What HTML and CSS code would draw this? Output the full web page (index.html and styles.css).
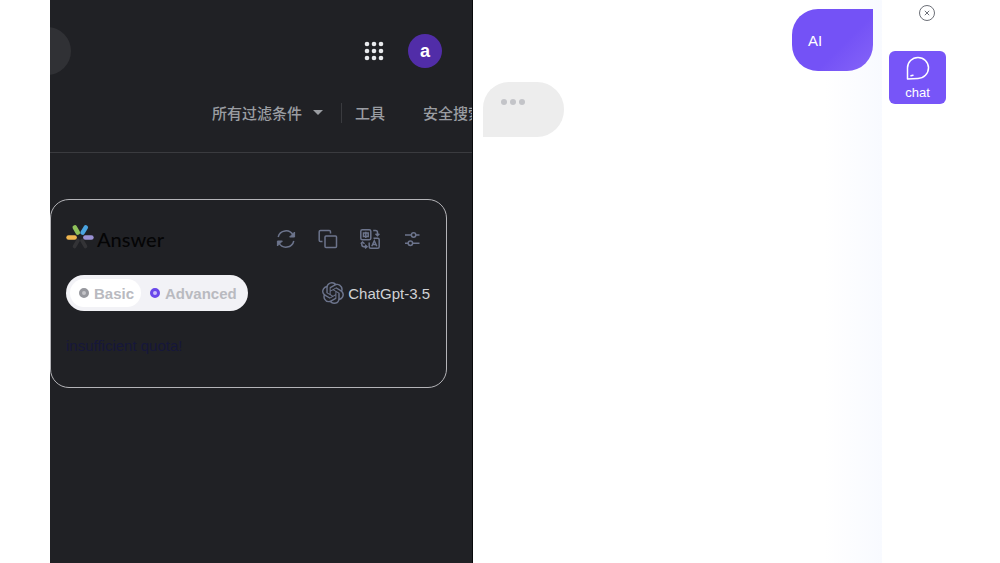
FILE: index.html
```
<!DOCTYPE html>
<html lang="zh-CN">
<head>
  <meta charset="UTF-8">
  <meta name="viewport" content="width=device-width, initial-scale=1.0">
  <title>Answer</title>
  <link rel="stylesheet" href="styles.css">
</head>
<body>
  <div class="container">
    <main class="results">
      <header class="topbar">
        <input type="search" class="search" aria-label="搜索">
        <button class="icon-btn apps" aria-label="Apps">
          <svg width="20" height="20" viewBox="0 0 20 20" fill="#e8eaed">
            <circle cx="3" cy="3" r="2.3"/><circle cx="10" cy="3" r="2.3"/><circle cx="17" cy="3" r="2.3"/>
            <circle cx="3" cy="10" r="2.3"/><circle cx="10" cy="10" r="2.3"/><circle cx="17" cy="10" r="2.3"/>
            <circle cx="3" cy="17" r="2.3"/><circle cx="10" cy="17" r="2.3"/><circle cx="17" cy="17" r="2.3"/>
          </svg>
        </button>
        <button class="avatar">a</button>
      </header>
      <nav class="filters">
        <button class="filter">所有过滤条件 <span class="caret"></span></button>
        <button class="filter tools">工具</button>
        <button class="filter">安全搜索</button>
      </nav>

      <section class="card">
        <div class="card-header">
          <svg class="logo" width="28" height="26" viewBox="0 0 28 26" stroke-width="4.6" stroke-linecap="round">
            <path d="M12 16.5L8.5 22.5M16 16.5L19.5 22.5" stroke="#333336" stroke-width="3.6"/>
            <path d="M2.6 13.5H8.6" stroke="#f0b64f"/>
            <path d="M8.8 3.4L11.8 8.6" stroke="#8fc15a"/>
            <path d="M19.8 3.4L16.6 8.6" stroke="#4aa3e0"/>
            <path d="M19.4 13.5H25.4" stroke="#9a91d4"/>
          </svg>
          <h1>Answer</h1>
          <div class="actions">
            <button class="icon-btn" aria-label="Refresh">
              <svg width="20" height="20" viewBox="0 0 20 20">
                <path d="M2.2 8A8 8 0 0 1 17 6M17.8 12A8 8 0 0 1 3 14"/>
                <path d="M18.6 3V8H13.6L18.6 3ZM1.4 17V12H6.4L1.4 17Z" fill="#6c748c" stroke-width="1"/>
              </svg>
            </button>
            <button class="icon-btn" aria-label="Copy">
              <svg width="20" height="20" viewBox="0 0 20 20">
                <path d="M4.5 12.5H2.5A1.3 1.3 0 0 1 1.2 11.2V2.8A1.3 1.3 0 0 1 2.5 1.5H11.2A1.3 1.3 0 0 1 12.5 2.8V4.5"/>
                <rect x="7" y="7" width="11.5" height="11.5" rx="1"/>
              </svg>
            </button>
            <button class="icon-btn" aria-label="Translate">
              <svg width="20" height="20" viewBox="0 0 20 20">
                <rect x="0.8" y="0.8" width="10" height="10" rx="1.5"/>
                <path d="M3.5 4H8.2V7.5H3.5ZM5.8 2.8V9"/>
                <path d="M13.5 9.2H17.7A1.5 1.5 0 0 1 19.2 10.7V17.7A1.5 1.5 0 0 1 17.7 19.2H10.7A1.5 1.5 0 0 1 9.2 17.7V13.5"/>
                <path d="M11.8 17.2L14.3 11.8L16.8 17.2M12.8 15.6H15.8"/>
                <path d="M13.2 1.5H15.5Q17.5 1.5 17.5 3.5V6.3M15.5 4.8L17.5 6.8L19.4 4.8M1.8 13.2V15.5Q1.8 17.7 4 17.7H6.5M0.8 14.8L2.5 13L4.5 14.8M5 15.8L7 17.7L5 19.4"/>
              </svg>
            </button>
            <button class="icon-btn" aria-label="Settings">
              <svg width="20" height="20" viewBox="0 0 20 20">
                <path d="M3 6H9.2M14 6H17.5M3 14.2H6M10.8 14.2H17.5"/>
                <circle cx="11.6" cy="6" r="2.2"/>
                <circle cx="8.4" cy="14.2" r="2.2"/>
              </svg>
            </button>
          </div>
        </div>
        <div class="card-row">
          <div class="toggle">
            <label class="selected"><input type="radio" name="mode" checked>Basic</label>
            <label><input type="radio" name="mode" class="purple">Advanced</label>
          </div>
          <div class="model">
            <svg width="22" height="22" viewBox="0 0 24 24" fill="#6c748c">
              <path d="M22.28 9.82a5.98 5.98 0 0 0-.52-4.91 6.05 6.05 0 0 0-6.51-2.9A6.07 6.07 0 0 0 4.98 4.18a5.98 5.98 0 0 0-4 2.9 6.05 6.05 0 0 0 .74 7.1 5.98 5.98 0 0 0 .51 4.91 6.05 6.05 0 0 0 6.51 2.9A5.98 5.98 0 0 0 13.26 24a6.06 6.06 0 0 0 5.77-4.21 5.99 5.99 0 0 0 4-2.9 6.06 6.06 0 0 0-.75-7.07zm-9.02 12.61a4.48 4.48 0 0 1-2.88-1.04l.14-.08 4.78-2.76a.79.79 0 0 0 .39-.68v-6.74l2.02 1.17a.07.07 0 0 1 .04.05v5.58a4.5 4.5 0 0 1-4.49 4.5zM3.6 18.3a4.47 4.47 0 0 1-.53-3.01l.14.08 4.78 2.76a.77.77 0 0 0 .78 0l5.84-3.37v2.33a.08.08 0 0 1-.03.06L9.74 19.95A4.5 4.5 0 0 1 3.6 18.3zM2.34 7.9a4.49 4.49 0 0 1 2.37-1.98v5.68a.77.77 0 0 0 .39.68l5.81 3.35-2.02 1.17a.08.08 0 0 1-.07 0l-4.83-2.79A4.5 4.5 0 0 1 2.34 7.87zm16.6 3.86-5.84-3.39L15.12 7.2a.08.08 0 0 1 .07 0l4.83 2.79a4.49 4.49 0 0 1-.68 8.1v-5.68a.79.79 0 0 0-.4-.65zm2.01-3.03-.14-.08-4.77-2.78a.78.78 0 0 0-.79 0L9.41 9.23V6.9a.07.07 0 0 1 .03-.06l4.83-2.79a4.5 4.5 0 0 1 6.68 4.66zM8.31 12.86l-2.02-1.16a.08.08 0 0 1-.04-.06V6.07a4.5 4.5 0 0 1 7.38-3.45l-.14.08L8.7 5.46a.79.79 0 0 0-.39.68zm1.1-2.37 2.6-1.5 2.61 1.5v3l-2.6 1.5-2.61-1.5z"/>
            </svg>
            <span>ChatGpt-3.5</span>
          </div>
        </div>
        <p class="message">insufficient quota!</p>
      </section>
    </main>

    <section class="chat">
      <div class="bubble sent">AI</div>
      <div class="bubble typing" aria-label="typing">
        <span class="dot"></span><span class="dot"></span><span class="dot"></span>
      </div>
    </section>

    <aside class="sidebar">
      <button class="icon-btn close" aria-label="Close">
        <svg width="18" height="18" viewBox="0 0 18 18">
          <circle cx="9" cy="9" r="7.5"/>
          <path d="M6.8 6.8L11.2 11.2M11.2 6.8L6.8 11.2"/>
        </svg>
      </button>
      <button class="chat-btn">
        <svg width="26" height="26" viewBox="0 0 26 26" fill="none" stroke="#fff" stroke-width="1.5" stroke-linejoin="round" stroke-linecap="round">
          <path d="M2.5 24V13A10.5 10.5 0 1 1 13 23.4L2.5 24ZM6 20.8L8 20.2"/>
        </svg>
        chat
      </button>
    </aside>
  </div>
</body>
</html>
```
FILE: styles.css
```
* {
  box-sizing: border-box;
}
body {
  margin: 0;
  font-family: "Liberation Sans", Arial, "Noto Sans CJK SC", sans-serif;
  font-size: 15px;
  background-color: #fff;
}
button {
  padding: 0;
  border: none;
  background: none;
  font: inherit;
  cursor: pointer;
}
svg {
  display: block;
}
.container {
  display: flex;
  min-height: 100vh;
  padding: 0 50px;
}

/* search results */
.results {
  flex: 0 0 47%;
  overflow: hidden;
  background-color: #202125;
  border-right: 1px solid #08090c;
}
.topbar {
  display: flex;
  align-items: center;
  padding: 27px 30px 0 0;
}
.search {
  width: 48px;
  height: 48px;
  margin: 0 auto 0 -27px;
  border: none;
  border-radius: 24px;
  background-color: #303135;
  appearance: none;
}
.avatar {
  width: 34px;
  height: 34px;
  margin-left: 24px;
  border-radius: 50%;
  background-color: #512da8;
  color: #fff;
  font-size: 18px;
  font-weight: bold;
}
.filters {
  display: flex;
  align-items: center;
  height: 78px;
  padding: 0 0 2px 162px;
  border-bottom: 1px solid #3a3b3f;
}
.filter {
  display: flex;
  flex-shrink: 0;
  align-items: center;
  color: #9a9da2;
  font-weight: 500;
  white-space: nowrap;
}
.caret {
  margin: 0 18px 0 11px;
  border: 5px solid transparent;
  border-top-color: #9a9da2;
  border-bottom: none;
}
.tools {
  height: 20px;
  margin-right: 38px;
  padding-left: 13px;
  border-left: 1px solid #3a3b3f;
}

/* answer card */
.card {
  margin: 46px 25px 0 0;
  padding: 23px 16px 32px 15px;
  border: 1px solid #b4b4b8;
  border-radius: 19px;
}
.card-header {
  display: flex;
  align-items: center;
  height: 32px;
}
.logo {
  margin-bottom: 4px;
}
h1 {
  margin: 0 0 0 3px;
  color: #050506;
  font-family: Lato, sans-serif;
  font-size: 20px;
  font-weight: 500;
}
.actions {
  display: flex;
  gap: 22px;
  margin: 0 8px 0 auto;
}
.actions svg {
  fill: none;
  stroke: #6c748c;
  stroke-width: 1.5;
}
.card-row {
  display: flex;
  align-items: center;
  justify-content: space-between;
  margin-top: 20px;
}
.toggle {
  display: flex;
  padding: 4px;
  border-radius: 18px;
  background-color: #f2f2f6;
  color: #b9bac0;
  font-weight: bold;
}
.toggle label {
  display: flex;
  align-items: center;
  gap: 5px;
  height: 28px;
  padding: 0 7px 0 9px;
  border-radius: 14px;
}
.toggle .selected {
  background-color: #fff;
}
.toggle input {
  width: 10px;
  height: 10px;
  margin: 0;
  border: 3px solid #96979d;
  border-radius: 50%;
  background-color: #c4c4c8;
  appearance: none;
}
.toggle .purple {
  border-color: #6a48ea;
  background-color: #c9bdfa;
}
.model {
  display: flex;
  align-items: center;
  gap: 4px;
  color: #d0d1d5;
}
.message {
  margin: 26px 0 0;
  color: #16173a;
  line-height: 18px;
}

/* chat panel */
.chat {
  display: flex;
  flex: 1;
  flex-direction: column;
  gap: 11px;
  padding: 9px 9px 9px 10px;
  background: linear-gradient(to right, #fff 86%, #f8faff);
}
.bubble {
  display: flex;
  width: 81px;
  padding: 0 16px;
}
.sent {
  align-items: center;
  align-self: flex-end;
  height: 62px;
  border-radius: 26px 0 26px 26px;
  background: linear-gradient(135deg, #7452f6 60%, #8564f8);
  color: #fff;
}
.typing {
  gap: 3px;
  height: 55px;
  padding: 17px 18px;
  border-radius: 26px 27px 27px 0;
  background-color: #ededed;
}
.dot {
  width: 6px;
  height: 6px;
  border-radius: 50%;
  background-color: #c3c4c8;
}

/* sidebar */
.sidebar {
  display: flex;
  flex: 0 0 68px;
  flex-direction: column;
  gap: 29px;
  padding: 4px 4px 0 7px;
}
.close {
  align-self: flex-end;
  margin-right: 10px;
}
.close svg {
  fill: none;
  stroke: #6d7078;
}
.chat-btn {
  display: flex;
  flex-direction: column;
  gap: 2px;
  align-items: center;
  padding: 4px 0 2px;
  border-radius: 6px;
  background-color: #7755f8;
  color: #fff;
  font-size: 13px;
  line-height: 19px;
}
```
